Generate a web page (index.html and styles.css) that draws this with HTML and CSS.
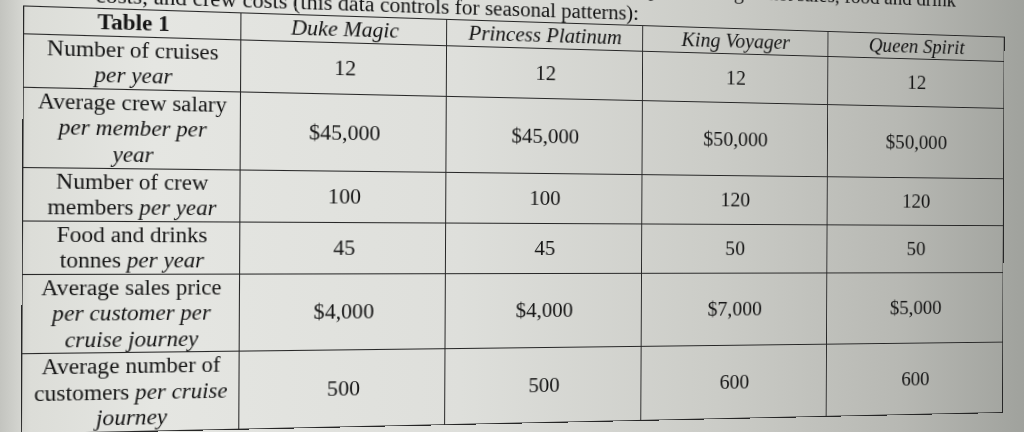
FILE: index.html
```html
<!DOCTYPE html>
<html lang="en">
<head>
<meta charset="utf-8">
<title>Table 1</title>
<link rel="stylesheet" href="styles.css">
</head>
<body>
<div class="sheet">
  <div class="intro">
    <p class="line line-first">Use the information given for each ship, including ticket sales, food and drink</p>
    <p class="line">costs, and crew costs (this data controls for seasonal patterns):</p>
  </div>
  <table class="data">
    <colgroup><col><col><col><col><col></colgroup>
    <tr class="r-head">
      <th class="label bold">Table 1</th>
      <th class="ship">Duke Magic</th>
      <th class="ship">Princess Platinum</th>
      <th class="ship">King Voyager</th>
      <th class="ship">Queen Spirit</th>
    </tr>
    <tr class="r-2">
      <td class="label">Number of cruises<br><i>per year</i></td>
      <td class="val">12</td><td class="val">12</td><td class="val">12</td><td class="val">12</td>
    </tr>
    <tr class="r-3">
      <td class="label">Average crew salary<br><i>per member per</i><br><i>year</i></td>
      <td class="val">$45,000</td><td class="val">$45,000</td><td class="val">$50,000</td><td class="val">$50,000</td>
    </tr>
    <tr class="r-2b">
      <td class="label">Number of crew<br>members <i>per year</i></td>
      <td class="val">100</td><td class="val">100</td><td class="val">120</td><td class="val">120</td>
    </tr>
    <tr class="r-2c">
      <td class="label">Food and drinks<br>tonnes <i>per year</i></td>
      <td class="val">45</td><td class="val">45</td><td class="val">50</td><td class="val">50</td>
    </tr>
    <tr class="r-3b">
      <td class="label">Average sales price<br><i>per customer per</i><br><i>cruise journey</i></td>
      <td class="val">$4,000</td><td class="val">$4,000</td><td class="val">$7,000</td><td class="val">$5,000</td>
    </tr>
    <tr class="r-3c">
      <td class="label">Average number of<br>customers <i>per cruise</i><br><i>journey</i></td>
      <td class="val">500</td><td class="val">500</td><td class="val">600</td><td class="val">600</td>
    </tr>
  </table>
</div>
</body>
</html>
```
FILE: styles.css
```css
html, body {
  margin: 0;
  padding: 0;
  width: 1024px;
  height: 432px;
  overflow: hidden;
}
body {
  background: linear-gradient(to right,
    #c3c4bf 0%, #dcddd8 3%, #e5e6e2 15%, #dedfdb 45%,
    #cbccc7 70%, #b7b8b3 88%, #a0a29d 100%);
  font-family: "Liberation Serif", "Times New Roman", serif;
  color: #141414;
}
.sheet {
  width: 1012px;
  margin: -26.7px 0 0 39px;
  transform-origin: 50% 245.7px;
  transform: perspective(2000px) rotateY(15deg) rotate(0.3deg);
}
.intro {
  height: 49px;
  padding-left: 66px;
}
.line {
  margin: 0;
  font-size: 21.6px;
  line-height: 24.5px;
  white-space: nowrap;
}
.line-first {
  width: 889px;
  text-align: right;
}
.data {
  width: 1012px;
  table-layout: fixed;
  border-collapse: collapse;
  font-size: 21.6px;
  line-height: 24.5px;
}
.data col { width: 20%; }
.data th, .data td {
  border: 1.5px solid #262626;
  padding: 0;
  text-align: center;
}
.data th {
  font-weight: normal;
  vertical-align: top;
}
.data .bold { font-weight: bold; }
.ship { font-style: italic; }
.label {
  padding: 0 11px;
  vertical-align: top;
}
.val {
  vertical-align: middle;
  padding-top: 5px;
}
.r-head { height: 25.3px; }
.r-2 { height: 50.4px; }
.r-3 { height: 74.8px; }
.r-2b { height: 49.5px; }
.r-2c { height: 48.6px; }
.r-3b { height: 73.8px; }
.r-3c { height: 71px; }
```
